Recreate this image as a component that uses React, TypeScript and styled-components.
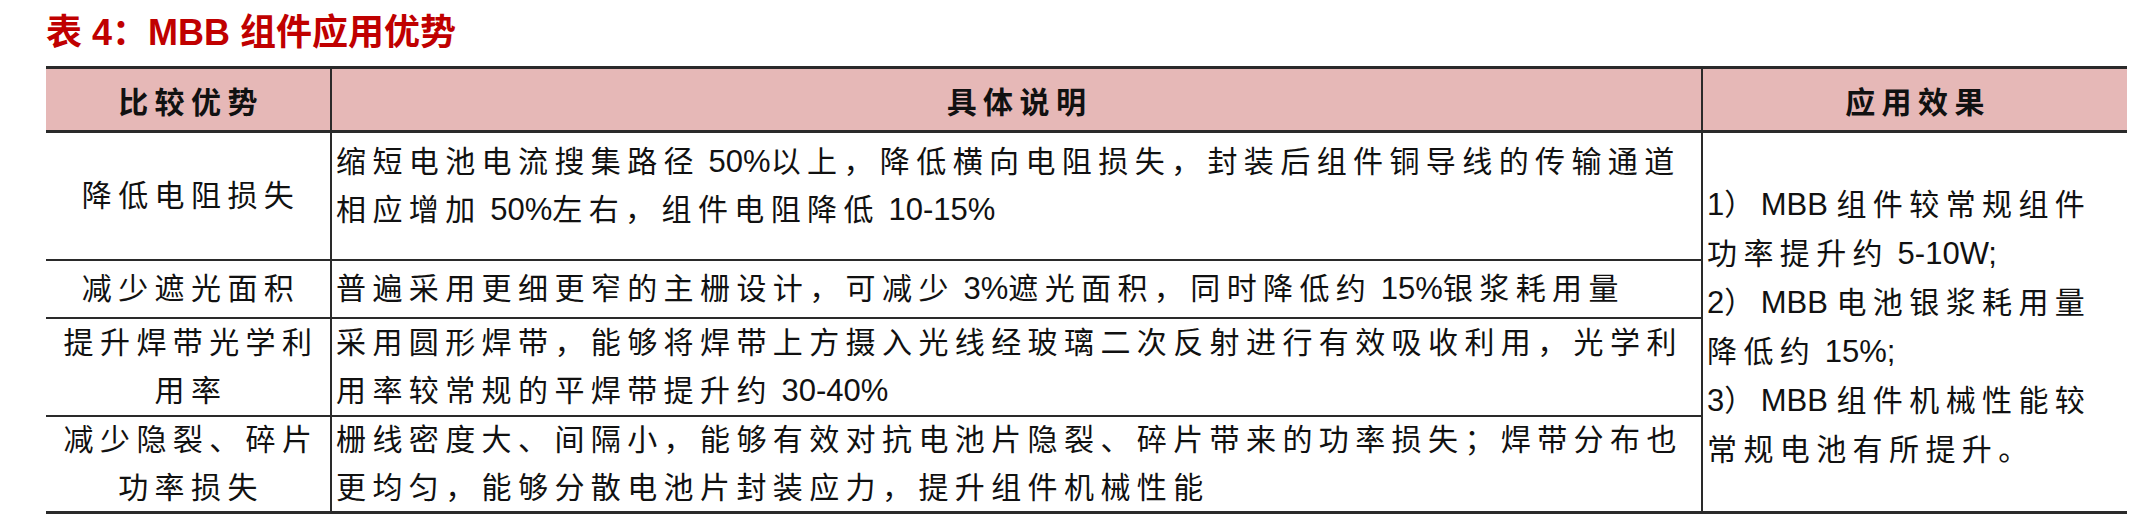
import React, { ReactNode } from 'react';
import styled, { createGlobalStyle } from 'styled-components';

const GlobalStyle = createGlobalStyle`
  html, body {
    margin: 0;
    padding: 0;
    background: #fff;
  }
  body {
    font-family: "Liberation Sans", "Noto Sans CJK SC", sans-serif;
    color: #111;
  }
`;

/**
 * Row data for the table body
 */
type IRow = {
  label: string[];
  lines: string[];
  top?: boolean;
};

const rows: IRow[] = [
  {
    label: ['降低电阻损失'],
    lines: [
      '缩短电池电流搜集路径 50%以上，降低横向电阻损失，封装后组件铜导线的传输通道',
      '相应增加 50%左右，组件电阻降低 10-15%',
    ],
    top: true,
  },
  {
    label: ['减少遮光面积'],
    lines: ['普遍采用更细更窄的主栅设计，可减少 3%遮光面积，同时降低约 15%银浆耗用量'],
  },
  {
    label: ['提升焊带光学利', '用率'],
    lines: [
      '采用圆形焊带，能够将焊带上方摄入光线经玻璃二次反射进行有效吸收利用，光学利',
      '用率较常规的平焊带提升约 30-40%',
    ],
  },
  {
    label: ['减少隐裂、碎片', '功率损失'],
    lines: [
      '栅线密度大、间隔小，能够有效对抗电池片隐裂、碎片带来的功率损失；焊带分布也',
      '更均匀，能够分散电池片封装应力，提升组件机械性能',
    ],
  },
];

const effects = [
  '1）MBB 组件较常规组件',
  '功率提升约 5-10W;',
  '2）MBB 电池银浆耗用量',
  '降低约 15%;',
  '3）MBB 组件机械性能较',
  '常规电池有所提升。',
];

// latin runs keep their natural spacing, cjk text gets the grid spacing
const mix = (text: string): ReactNode[] =>
  text.split(/( ?[0-9A-Za-z%;\-]+ ?)/).filter(Boolean).map((part, i) =>
    /[0-9A-Za-z]/.test(part) ? <Num key={i}>{part}</Num> : <React.Fragment key={i}>{part}</React.Fragment>
  );

function App() {
  return (
    <Page>
      <GlobalStyle />
      <Title>表 4：MBB 组件应用优势</Title>
      <Table>
        <HeadCell $divider>比较优势</HeadCell>
        <HeadCell $divider>具体说明</HeadCell>
        <HeadCell>应用效果</HeadCell>

        {rows.map((row, r) => (
          <React.Fragment key={r}>
            <LabelCell $last={r === rows.length - 1} style={{ gridRow: r + 2 }}>
              {row.label.map((l) => (
                <Line key={l}>{l}</Line>
              ))}
            </LabelCell>
            <DescCell $last={r === rows.length - 1} $top={row.top} style={{ gridRow: r + 2 }}>
              {row.lines.map((l) => (
                <Line key={l}>{mix(l)}</Line>
              ))}
            </DescCell>
          </React.Fragment>
        ))}

        <EffectCell>
          {effects.map((l) => (
            <Line key={l}>{mix(l)}</Line>
          ))}
        </EffectCell>
      </Table>
    </Page>
  );
}

/**
 * Styled components
 */
const Page = styled.div`
  width: 2140px;
  height: 522px;
  box-sizing: border-box;
  padding: 10px 13px 0 46px;
  overflow: hidden;
`;

const Title = styled.div`
  color: #c00000;
  font-weight: 700;
  font-size: 36px;
  line-height: 46px;
  height: 46px;
  margin-bottom: 10px;
  white-space: nowrap;
`;

const Table = styled.div`
  display: grid;
  grid-template-columns: 286px 1371px 424px;
  grid-template-rows: 64px 128px 58px 98px 94px;
  border-top: 3px solid #2a2a2a;
  border-bottom: 3px solid #2a2a2a;
  font-size: 30px;
  letter-spacing: 6.4px;
  color: #111;
`;

const HeadCell = styled.div<{ $divider?: boolean }>`
  background: #e6b8b7;
  border-bottom: 3px solid #2a2a2a;
  border-right: ${(p) => (p.$divider ? '2px solid #2a2a2a' : 'none')};
  box-sizing: border-box;
  display: flex;
  align-items: center;
  justify-content: center;
  font-weight: 700;
  font-size: 30px;
  padding-left: 6px;
  white-space: nowrap;
`;

const LabelCell = styled.div<{ $last?: boolean }>`
  grid-column: 1;
  border-right: 2px solid #2a2a2a;
  border-bottom: ${(p) => (p.$last ? 'none' : '2px solid #2a2a2a')};
  box-sizing: border-box;
  display: flex;
  flex-direction: column;
  align-items: center;
  justify-content: center;
  text-align: center;
  padding-left: 6px;
  line-height: 48px;
  white-space: nowrap;
`;

const DescCell = styled.div<{ $last?: boolean; $top?: boolean }>`
  grid-column: 2;
  border-right: 2px solid #2a2a2a;
  border-bottom: ${(p) => (p.$last ? 'none' : '2px solid #2a2a2a')};
  box-sizing: border-box;
  display: flex;
  flex-direction: column;
  justify-content: ${(p) => (p.$top ? 'flex-start' : 'center')};
  padding: ${(p) => (p.$top ? '5px 0 0 4px' : '0 0 0 4px')};
  line-height: 48px;
  white-space: nowrap;
`;

const EffectCell = styled.div`
  grid-column: 3;
  grid-row: 2 / span 4;
  box-sizing: border-box;
  display: flex;
  flex-direction: column;
  justify-content: center;
  padding: 10px 0 0 4px;
  line-height: 49px;
  white-space: nowrap;
`;

const Line = styled.div`
  display: block;
`;

const Num = styled.span`
  font-family: "Liberation Sans", Arial, sans-serif;
  font-size: 31px;
  letter-spacing: 0;
`;

export default App;
